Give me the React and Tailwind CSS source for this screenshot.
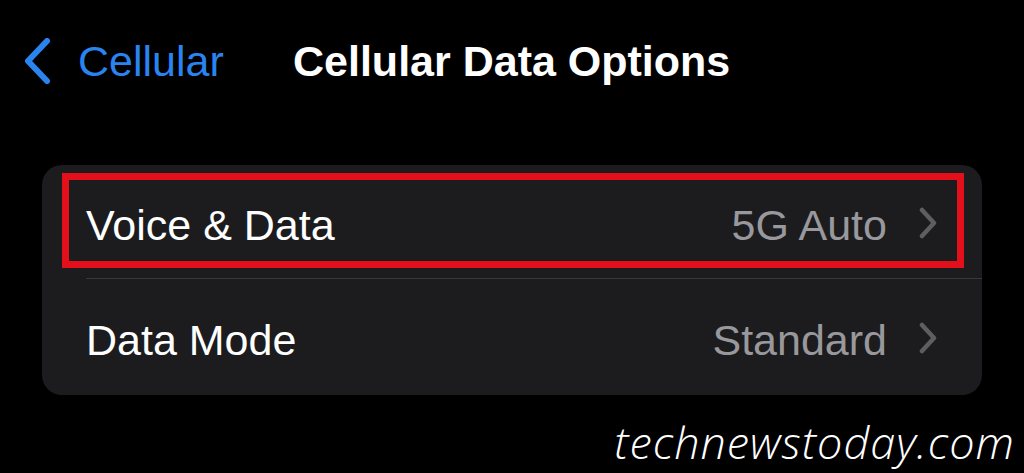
import React from 'react';

function Chevron() {
  return (
    <svg width="20" height="32" viewBox="0 0 20 32" className="shrink-0">
      <path d="M4 3 L16 16 L4 29" fill="none" stroke="#5d5d62" strokeWidth="4.5" strokeLinecap="round" strokeLinejoin="round" />
    </svg>
  );
}

function Row({ label, value }) {
  return (
    <div className="flex items-center h-full pl-[44px] pr-[44px] pt-[7px]">
      <span className="text-white">{label}</span>
      <span className="ml-auto text-[#98989d]">{value}</span>
      <span className="ml-[31px] -mt-[5px]"><Chevron /></span>
    </div>
  );
}

export default function App() {
  return (
    <div className="w-[1024px] h-[473px] bg-black overflow-hidden relative" style={{ fontFamily: '"Liberation Sans", Arial, sans-serif' }}>
      {/* nav bar */}
      <div className="flex items-center h-[124px] pb-[2px]">
        <div className="flex items-center pl-[22px] w-[293px]">
          <svg width="30" height="46" viewBox="0 0 30 46" className="shrink-0">
            <path d="M25 3 L6 23 L25 43" fill="none" stroke="#2a84f0" strokeWidth="6" strokeLinecap="round" strokeLinejoin="round" />
          </svg>
          <span className="ml-[26px] text-[43px] text-[#2a84f0] leading-none">Cellular</span>
        </div>
        <span className="text-[43px] font-bold text-white leading-none">Cellular Data Options</span>
      </div>

      {/* list card */}
      <div className="relative mx-[42px] mt-[41px] rounded-[20px] bg-[#1c1c1e] text-[43px] leading-none">
        <div className="h-[113px]">
          <Row label="Voice & Data" value="5G Auto" />
        </div>
        <div className="ml-[44px] h-px bg-[#38383a]" />
        <div className="h-[116px]">
          <Row label="Data Mode" value="Standard" />
        </div>
        <div className="absolute left-[20px] top-[8px] w-[902px] h-[95px] border-[7px] border-[#e3101b]" />
      </div>

      {/* watermark */}
      <div className="absolute right-[9px] bottom-[9px] text-[45px] italic font-light text-white tracking-[1px] leading-none" style={{ fontFamily: '"Open Sans", sans-serif' }}>
        technewstoday.com
      </div>
    </div>
  );
}
